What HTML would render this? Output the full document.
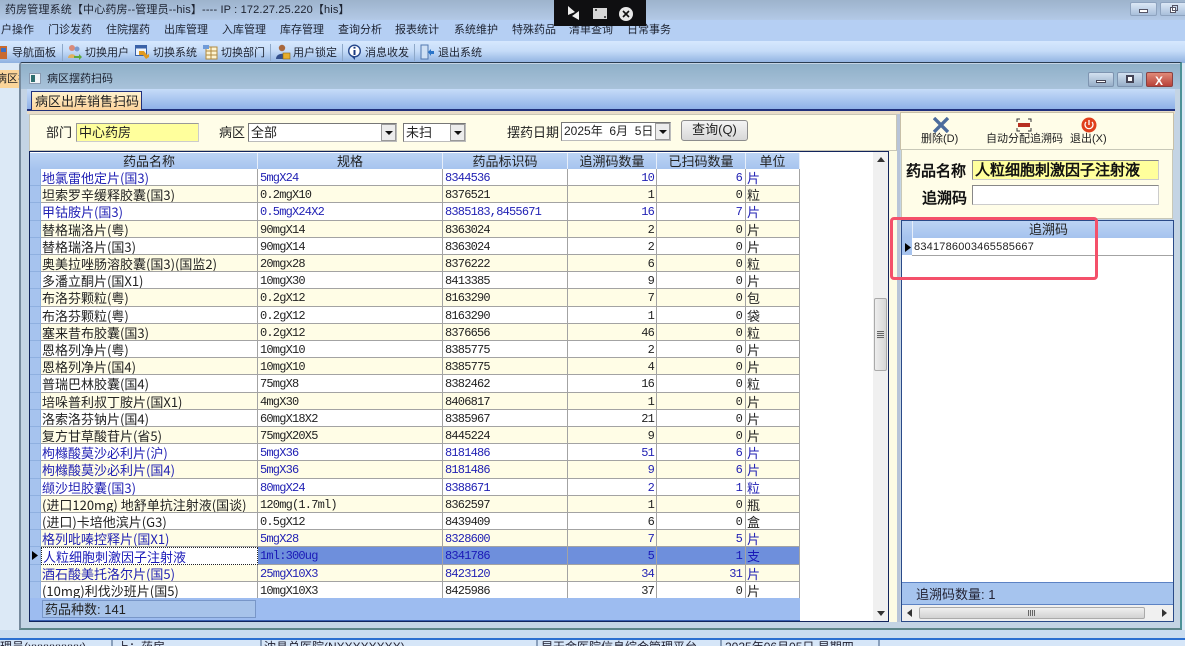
<!DOCTYPE html>
<html lang="zh"><head><meta charset="utf-8"><title>病区摆药扫码</title>
<style>
*{box-sizing:border-box}
html,body{margin:0;padding:0}
body{width:1185px;height:646px;position:relative;overflow:hidden;background:#dce9f6;font:12px "Liberation Sans","WenQuanYi Zen Hei",sans-serif;color:#222}
.a{position:absolute}
.t{position:absolute;white-space:nowrap;line-height:1}
.m{position:absolute;top:24px;font-size:11px;line-height:13px;color:#1c2230;white-space:nowrap}
.b{position:absolute;top:47px;font-size:11px;line-height:13px;color:#1c2230;white-space:nowrap}
.sep{position:absolute;top:44px;width:1px;height:17px;background:#8ea8c8}
.rows{position:absolute;left:30px;top:169px;width:770px;height:429px;overflow:hidden}
.r{position:absolute;left:0;width:770px;height:17.2px;display:flex;background:#fff;color:#222;font:12px/18px "Liberation Mono","WenQuanYi Zen Hei",monospace;letter-spacing:-.8px}
.r.c{background:#fffde6}
.r.u{color:#2222b4}
.r>*{display:block;flex:none;height:17.2px;border-bottom:1px solid #a3a3a3;border-right:1px solid #a3a3a3;overflow:hidden;white-space:nowrap}
.r i{width:11px;background:#a6c3ee!important;border-right:1px solid #8fb0e0;border-bottom-color:#8fb0e0}
.r b{width:217px;padding-left:1px;font:400 13px/17px "WenQuanYi Zen Hei","Noto Sans CJK SC",sans-serif;letter-spacing:0}
.r s{text-decoration:none;width:185px;padding-left:2px}
.r u{text-decoration:none;width:125px;padding-left:2px}
.r em{font-style:normal;width:89px;text-align:right;padding-right:2px}
.r q{quotes:none;width:89px;text-align:right;padding-right:3px}
.r q:before,.r q:after{content:none}
.r var{font:400 13px/17px "WenQuanYi Zen Hei","Noto Sans CJK SC",sans-serif;width:54px;padding-left:1px;letter-spacing:0}
.h{position:absolute;top:153px;height:17px;background:linear-gradient(#bcd4f4,#a5c3ee);border-right:1px solid #e6eefa;text-align:center;font:13px/17px "WenQuanYi Zen Hei",sans-serif;color:#222}
</style></head><body>

<!-- title bar -->
<div class="a" style="left:0;top:0;width:1185px;height:20px;background:linear-gradient(#9db3cc,#b3c9e6)"></div>
<div class="t" style="left:5px;top:4px;font-size:11px;line-height:13px;color:#1c2230;letter-spacing:.15px">药房管理系统【中心药房--管理员--his】---- IP : 172.27.25.220【his】</div>
<!-- menu -->
<div class="a" style="left:0;top:20px;width:1185px;height:21px;background:#b5cff3"></div>
<div class="m" style="left:1px">户操作</div><div class="m" style="left:48px">门诊发药</div><div class="m" style="left:106px">住院摆药</div><div class="m" style="left:164px">出库管理</div><div class="m" style="left:222px">入库管理</div><div class="m" style="left:280px">库存管理</div><div class="m" style="left:338px">查询分析</div><div class="m" style="left:395px">报表统计</div><div class="m" style="left:454px">系统维护</div><div class="m" style="left:512px">特殊药品</div><div class="m" style="left:569px">清单查询</div><div class="m" style="left:627px">日常事务</div>
<!-- toolbar -->
<div class="a" style="left:0;top:41px;width:1185px;height:22px;background:linear-gradient(#d6e8fe,#c6dcf8 45%,#8fb1e0)"></div>
<svg class="a" style="left:0;top:44px" width="10" height="16"><rect x="0" y="2" width="7" height="13" fill="#c96a30"/><rect x="1" y="4" width="5" height="4" fill="#3c6fc4"/></svg>
<div class="b" style="left:12px">导航面板</div><div class="sep" style="left:62px"></div>
<svg class="a" style="left:67px;top:44px" width="15" height="16"><circle cx="5" cy="4" r="3" fill="#d88a7a"/><path d="M1 14c0-5 8-5 8 0z" fill="#e0b060"/><circle cx="10" cy="5" r="2.5" fill="#7a9bd0"/><path d="M7 12h5v-2l3 3-3 3v-2H7z" fill="#5da83c"/></svg>
<div class="b" style="left:85px">切换用户</div>
<svg class="a" style="left:135px;top:45px" width="15" height="15"><rect x=".5" y=".5" width="11" height="10" fill="#eef4fc" stroke="#3a62a8"/><rect x=".5" y=".5" width="11" height="3" fill="#3a62a8"/><path d="M4 6h5l3 4 2-1v3l-3 2-3-4H4z" fill="#e09a20"/></svg>
<div class="b" style="left:153px">切换系统</div>
<svg class="a" style="left:203px;top:44px" width="15" height="16"><rect x="3" y="3" width="11" height="12" fill="#fdf3d0" stroke="#b08a40"/><path d="M3 7h11M3 11h11M8 3v12" stroke="#b08a40"/><rect x="0" y="1" width="6" height="4" fill="#6f9bd8"/></svg>
<div class="b" style="left:221px">切换部门</div><div class="sep" style="left:270px"></div>
<svg class="a" style="left:276px;top:44px" width="15" height="16"><circle cx="6" cy="4" r="3.2" fill="#a8683e"/><path d="M0 15c0-7 12-7 12 0z" fill="#33508c"/><rect x="7" y="9" width="7" height="6" fill="#e6ae2c" stroke="#8a6414" stroke-width=".6"/></svg>
<div class="b" style="left:293px">用户锁定</div><div class="sep" style="left:342px"></div>
<svg class="a" style="left:347px;top:44px" width="15" height="17"><circle cx="7.5" cy="7" r="5.8" fill="#fff" stroke="#26478a" stroke-width="1.4"/><path d="M7.5 2.8v1.8M7.5 6v5" stroke="#1c3b80" stroke-width="2"/><path d="M5 13l3 3v-3z" fill="#26478a"/></svg>
<div class="b" style="left:365px">消息收发</div><div class="sep" style="left:414px"></div>
<svg class="a" style="left:420px;top:44px" width="15" height="16"><rect x="1" y="1" width="7" height="14" fill="#cfe0f5" stroke="#5278b0"/><path d="M8 8l3-3v2h3v3h-3v2z" fill="#2a74c8"/></svg>
<div class="b" style="left:438px">退出系统</div>

<!-- left tab -->
<div class="a" style="left:0;top:70px;width:20px;height:18px;background:#fbd59a;overflow:hidden"><span class="t" style="left:-4px;top:4px;font-size:11px;color:#222">病区扫</span></div>

<!-- recording overlay -->
<div class="a" style="left:554px;top:0;width:92px;height:26px;background:#0f0f11"></div>
<svg class="a" style="left:565px;top:2px" width="70" height="22"><path d="M3 4l7 6-7 3zM14 9v9l-7-4z" fill="#eee"/><rect x="28" y="6" width="14" height="11" fill="#d8d8d8"/><path d="M30 8h2M39 15h2" stroke="#222" stroke-width="1.6"/><circle cx="61" cy="12" r="7" fill="#e8e8e8"/><path d="M58 9l6 6M64 9l-6 6" stroke="#111" stroke-width="1.6"/></svg>

<!-- main window controls -->
<div class="a" style="left:1130px;top:2px;width:27px;height:14px;background:linear-gradient(#dce8f6,#a9bfdb);border:1px solid #8ea3bf;border-radius:2px"></div>
<div class="a" style="left:1139px;top:9px;width:9px;height:4px;background:#fff;border:1px solid #556"></div>
<div class="a" style="left:1160px;top:2px;width:27px;height:14px;background:linear-gradient(#dce8f6,#a9bfdb);border:1px solid #8ea3bf;border-radius:2px"></div>
<div class="a" style="left:1170px;top:7px;width:6px;height:6px;background:#fff;border:1px solid #556"></div>
<div class="a" style="left:1172px;top:5px;width:6px;height:6px;border:1px solid #556"></div>

<!-- child window -->
<div class="a" style="left:19px;top:62px;width:1163px;height:568px;background:#c4d4e4;border:2px solid #76899c;border-top:1px solid #2a3c50;border-right:2px solid #4c9296;border-bottom:2px solid #5c8488;border-radius:3px 0 0 0"></div>
<div class="a" style="left:21px;top:64px;width:1159px;height:25px;background:linear-gradient(#8fb0c8,#a8c2da)"></div>
<svg class="a" style="left:29px;top:73px" width="12" height="11"><rect x=".5" y=".5" width="11" height="10" fill="#f2f5f8" stroke="#8a9ab0"/><rect x="2" y="2" width="4" height="7" fill="#2f6f70"/></svg>
<div class="t" style="left:47px;top:74px;font-size:11px;color:#1c2230">病区摆药扫码</div>
<div class="a" style="left:1088px;top:72px;width:26px;height:15px;background:linear-gradient(#d3e1ef,#97aec8);border:1px solid #7e94b0;border-radius:2px"></div>
<div class="a" style="left:1096px;top:80px;width:10px;height:3px;background:#fff;border:1px solid #445"></div>
<div class="a" style="left:1117px;top:72px;width:26px;height:15px;background:linear-gradient(#d3e1ef,#97aec8);border:1px solid #7e94b0;border-radius:2px"></div>
<div class="a" style="left:1126px;top:75px;width:8px;height:8px;background:#fff;border:2px solid #445"></div>
<div class="a" style="left:1146px;top:72px;width:27px;height:15px;background:linear-gradient(#e08a78,#b8423a);border:1px solid #8a4040;border-radius:2px"></div>
<div class="t" style="left:1155px;top:74px;font:700 12px 'Liberation Sans';color:#fff">X</div>
<!-- tab strip -->
<div class="a" style="left:27px;top:89px;width:1148px;height:22px;background:linear-gradient(#c6dcf8,#8fb1e8);border-bottom:2px solid #20307c"></div>
<div class="a" style="left:31px;top:91px;width:111px;height:19px;background:linear-gradient(#fff3cf,#fcd39b);border:1px solid #20307c;border-bottom:none;font:13px/19px 'WenQuanYi Zen Hei',sans-serif;padding-left:3px;color:#222">病区出库销售扫码</div>

<!-- splitter area -->
<div class="a" style="left:889px;top:111px;width:9px;height:511px;background:#fdfbe4"></div>
<div class="a" style="left:897px;top:111px;width:3px;height:511px;background:#b8c4d8"></div>
<div class="a" style="left:27px;top:111px;width:1148px;height:3px;background:#e8dcc8"></div>
<!-- filter panel -->
<div class="a" style="left:29px;top:114px;width:868px;height:37px;background:#fffde8;border:1px solid #c8c6b6"></div>
<div class="t" style="left:46px;top:126px;font-size:13px">部门</div>
<div class="a" style="left:76px;top:123px;width:123px;height:19px;background:#ffff9c;border:1px solid #ccc;border-left-color:#999;border-top-color:#999;font:13px/17px 'WenQuanYi Zen Hei',sans-serif;padding-left:2px">中心药房</div>
<div class="t" style="left:219px;top:126px;font-size:13px">病区</div>
<div class="a" style="left:248px;top:123px;width:149px;height:19px;background:#fff;border:1px solid #bbb;border-left-color:#777;border-top-color:#777;font:13px/17px 'WenQuanYi Zen Hei',sans-serif;padding-left:2px">全部</div>
<div class="a" style="left:381px;top:124px;width:15px;height:17px;background:#ececec;border:1px solid #999"></div>
<svg class="a" style="left:385px;top:131px" width="8" height="5"><path d="M0 0h8L4 4z" fill="#111"/></svg>
<div class="a" style="left:403px;top:123px;width:63px;height:19px;background:#fff;border:1px solid #bbb;border-left-color:#777;border-top-color:#777;font:13px/17px 'WenQuanYi Zen Hei',sans-serif;padding-left:2px">未扫</div>
<div class="a" style="left:450px;top:124px;width:15px;height:17px;background:#ececec;border:1px solid #999"></div>
<svg class="a" style="left:454px;top:131px" width="8" height="5"><path d="M0 0h8L4 4z" fill="#111"/></svg>
<div class="t" style="left:507px;top:126px;font-size:13px">摆药日期</div>
<div class="a" style="left:561px;top:122px;width:110px;height:19px;background:#fff;border:1px solid #bbb;border-left-color:#777;border-top-color:#777;font:12px/17px 'WenQuanYi Zen Hei',sans-serif;padding-left:2px;white-space:pre">2025年  6月  5日</div>
<div class="a" style="left:655px;top:123px;width:15px;height:17px;background:#ececec;border:1px solid #999"></div>
<svg class="a" style="left:659px;top:130px" width="8" height="5"><path d="M0 0h8L4 4z" fill="#111"/></svg>
<div class="a" style="left:681px;top:120px;width:67px;height:21px;background:linear-gradient(#f4f4f4,#d8d8d8);border:1px solid #8c8c8c;border-radius:3px;text-align:center;font:13px/18px 'WenQuanYi Zen Hei',sans-serif">查询(Q)</div>

<!-- left grid -->
<div class="a" style="left:29px;top:151px;width:860px;height:471px;background:#fff;border:1px solid #12245c"></div>
<div class="a" style="left:30px;top:153px;width:11px;height:17px;background:linear-gradient(#bcd4f4,#a5c3ee)"></div>
<div class="h" style="left:41px;width:217px">药品名称</div>
<div class="h" style="left:258px;width:185px">规格</div>
<div class="h" style="left:443px;width:125px">药品标识码</div>
<div class="h" style="left:568px;width:89px">追溯码数量</div>
<div class="h" style="left:657px;width:89px">已扫码数量</div>
<div class="h" style="left:746px;width:54px">单位</div>

<div class="rows">
<div class="r u" style="top:0"><i></i><b>地氯雷他定片(国3)</b><s>5mgX24</s><u>8344536</u><em>10</em><q>6</q><var>片</var></div>
<div class="r c" style="top:17.2px"><i></i><b>坦索罗辛缓释胶囊(国3)</b><s>0.2mgX10</s><u>8376521</u><em>1</em><q>0</q><var>粒</var></div>
<div class="r u" style="top:34.4px"><i></i><b>甲钴胺片(国3)</b><s>0.5mgX24X2</s><u>8385183,8455671</u><em>16</em><q>7</q><var>片</var></div>
<div class="r c" style="top:51.6px"><i></i><b>替格瑞洛片(粤)</b><s>90mgX14</s><u>8363024</u><em>2</em><q>0</q><var>片</var></div>
<div class="r" style="top:68.8px"><i></i><b>替格瑞洛片(国3)</b><s>90mgX14</s><u>8363024</u><em>2</em><q>0</q><var>片</var></div>
<div class="r c" style="top:86px"><i></i><b>奥美拉唑肠溶胶囊(国3)(国监2)</b><s>20mgx28</s><u>8376222</u><em>6</em><q>0</q><var>粒</var></div>
<div class="r" style="top:103.2px"><i></i><b>多潘立酮片(国X1)</b><s>10mgX30</s><u>8413385</u><em>9</em><q>0</q><var>片</var></div>
<div class="r c" style="top:120.4px"><i></i><b>布洛芬颗粒(粤)</b><s>0.2gX12</s><u>8163290</u><em>7</em><q>0</q><var>包</var></div>
<div class="r" style="top:137.6px"><i></i><b>布洛芬颗粒(粤)</b><s>0.2gX12</s><u>8163290</u><em>1</em><q>0</q><var>袋</var></div>
<div class="r c" style="top:154.8px"><i></i><b>塞来昔布胶囊(国3)</b><s>0.2gX12</s><u>8376656</u><em>46</em><q>0</q><var>粒</var></div>
<div class="r" style="top:172px"><i></i><b>恩格列净片(粤)</b><s>10mgX10</s><u>8385775</u><em>2</em><q>0</q><var>片</var></div>
<div class="r c" style="top:189.2px"><i></i><b>恩格列净片(国4)</b><s>10mgX10</s><u>8385775</u><em>4</em><q>0</q><var>片</var></div>
<div class="r" style="top:206.4px"><i></i><b>普瑞巴林胶囊(国4)</b><s>75mgX8</s><u>8382462</u><em>16</em><q>0</q><var>粒</var></div>
<div class="r c" style="top:223.6px"><i></i><b>培哚普利叔丁胺片(国X1)</b><s>4mgX30</s><u>8406817</u><em>1</em><q>0</q><var>片</var></div>
<div class="r" style="top:240.8px"><i></i><b>洛索洛芬钠片(国4)</b><s>60mgX18X2</s><u>8385967</u><em>21</em><q>0</q><var>片</var></div>
<div class="r c" style="top:258px"><i></i><b>复方甘草酸苷片(省5)</b><s>75mgX20X5</s><u>8445224</u><em>9</em><q>0</q><var>片</var></div>
<div class="r u" style="top:275.2px"><i></i><b>枸橼酸莫沙必利片(沪)</b><s>5mgX36</s><u>8181486</u><em>51</em><q>6</q><var>片</var></div>
<div class="r u c" style="top:292.4px"><i></i><b>枸橼酸莫沙必利片(国4)</b><s>5mgX36</s><u>8181486</u><em>9</em><q>6</q><var>片</var></div>
<div class="r u" style="top:309.6px"><i></i><b>缬沙坦胶囊(国3)</b><s>80mgX24</s><u>8388671</u><em>2</em><q>1</q><var>粒</var></div>
<div class="r c" style="top:326.8px"><i></i><b>(进口120mg) 地舒单抗注射液(国谈)</b><s>120mg(1.7ml)</s><u>8362597</u><em>1</em><q>0</q><var>瓶</var></div>
<div class="r" style="top:344px"><i></i><b>(进口)卡培他滨片(G3)</b><s>0.5gX12</s><u>8439409</u><em>6</em><q>0</q><var>盒</var></div>
<div class="r u c" style="top:361.2px"><i></i><b>格列吡嗪控释片(国X1)</b><s>5mgX28</s><u>8328600</u><em>7</em><q>5</q><var>片</var></div>
<div class="r u" style="top:378.4px;color:#1a1ab8"><i style="position:relative"><svg style="position:absolute;left:2px;top:4px" width="6" height="9"><path d="M0 0l6 4.5L0 9z" fill="#000"/></svg></i><b style="border:1px dotted #222">人粒细胞刺激因子注射液</b><s style="background:#6e8fdc">1ml:300ug</s><u style="background:#6e8fdc">8341786</u><em style="background:#6e8fdc">5</em><q style="background:#6e8fdc">1</q><var style="background:#6e8fdc">支</var></div>
<div class="r u c" style="top:395.6px"><i></i><b>酒石酸美托洛尔片(国5)</b><s>25mgX10X3</s><u>8423120</u><em>34</em><q>31</q><var>片</var></div>
<div class="r" style="top:412.8px"><i></i><b>(10mg)利伐沙班片(国5)</b><s>10mgX10X3</s><u>8425986</u><em>37</em><q>0</q><var>片</var></div>
</div>
<!-- left footer -->
<div class="a" style="left:30px;top:598px;width:770px;height:23px;background:#9dbcf0;border-bottom:1px solid #3a5fb0"></div>
<div class="a" style="left:42px;top:600px;width:214px;height:18px;background:#a7c3ea;border:1px solid #7896c8;font:13px/17px 'WenQuanYi Zen Hei',sans-serif;padding-left:2px">药品种数: 141</div>
<!-- left scrollbar -->
<div class="a" style="left:873px;top:152px;width:15px;height:469px;background:#f0f0f0"></div>
<svg class="a" style="left:877px;top:157px" width="8" height="5"><path d="M0 5h8L4 0z" fill="#333"/></svg>
<svg class="a" style="left:877px;top:611px" width="8" height="5"><path d="M0 0h8L4 5z" fill="#333"/></svg>
<div class="a" style="left:874px;top:298px;width:13px;height:73px;background:linear-gradient(90deg,#eee,#d6d6d6);border:1px solid #aaa;border-radius:2px"></div>
<div class="a" style="left:877px;top:331px;width:7px;height:8px;background:repeating-linear-gradient(#666 0 1px,#ddd 1px 2px)"></div>

<!-- right panel -->
<div class="a" style="left:900px;top:112px;width:274px;height:38px;background:#fffde8;border:1px solid #c8c0a8"></div>
<svg class="a" style="left:933px;top:117px" width="16" height="16"><path d="M1 1l14 14M15 1L1 15" stroke="#4c6c9c" stroke-width="3.4"/></svg>
<div class="t" style="left:921px;top:134px;font-size:11px">删除(D)</div>
<svg class="a" style="left:1016px;top:118px" width="16" height="14"><path d="M1 4V1h3M12 1h3v3M1 10v3h3M12 13h3v-3" fill="none" stroke="#333"/><path d="M2 5h12v4H2z" fill="#b83020"/></svg>
<div class="t" style="left:986px;top:134px;font-size:11px">自动分配追溯码</div>
<svg class="a" style="left:1081px;top:117px" width="16" height="16"><circle cx="8" cy="8" r="7.5" fill="#e0401c"/><path d="M8 3v5M5 5a4 4 0 1 0 6 0" fill="none" stroke="#fff" stroke-width="1.3"/></svg>
<div class="t" style="left:1070px;top:134px;font-size:11px">退出(X)</div>

<div class="a" style="left:901px;top:149px;width:272px;height:70px;background:#fffde8;border:1px solid #c8c8b8"></div>
<div class="t" style="left:906px;top:160px;font:700 15px 'WenQuanYi Zen Hei',sans-serif;color:#111">药品名称</div>
<div class="a" style="left:972px;top:160px;width:187px;height:20px;background:#ffff9c;border:1px solid #ccc;border-left-color:#888;border-top-color:#888;font:700 15px/19px 'WenQuanYi Zen Hei',sans-serif;padding-left:2px;color:#111">人粒细胞刺激因子注射液</div>
<div class="t" style="left:922px;top:187px;font:700 15px 'WenQuanYi Zen Hei',sans-serif;color:#111">追溯码</div>
<div class="a" style="left:972px;top:185px;width:187px;height:20px;background:#fff;border:1px solid #ccc;border-left-color:#888;border-top-color:#888"></div>

<div class="a" style="left:901px;top:220px;width:273px;height:402px;background:#fff;border:1px solid #2a4a88"></div>
<div class="a" style="left:902px;top:221px;width:271px;height:17px;background:linear-gradient(#bcd4f4,#a5c3ee);text-align:center;font:13px/18px 'WenQuanYi Zen Hei',sans-serif;padding-left:22px;color:#222">追溯码</div>
<div class="a" style="left:912px;top:221px;width:1px;height:17px;background:#e6eefa"></div>
<div class="a" style="left:902px;top:238px;width:10px;height:17px;background:#a6c3ee"></div>
<svg class="a" style="left:905px;top:243px" width="6" height="9"><path d="M0 0l6 4.5L0 9z" fill="#000"/></svg>
<div class="a" style="left:912px;top:238px;width:261px;height:18px;border-bottom:1px solid #a3a3a3;font:11px/19px 'Liberation Sans',sans-serif;padding-left:2px;letter-spacing:.2px">8341786003465585667</div>
<div class="a" style="left:902px;top:582px;width:271px;height:23px;background:#a6c4ee;border-top:1px solid #5c82c4;border-bottom:1px solid #5c82c4"></div>
<div class="t" style="left:916px;top:584px;font:13px 'WenQuanYi Zen Hei',sans-serif;color:#223">追溯码数量: 1</div>
<div class="a" style="left:902px;top:605px;width:271px;height:16px;background:#f0f0f0"></div>
<div class="a" style="left:919px;top:607px;width:226px;height:12px;background:linear-gradient(#efefef,#d2d2d2);border:1px solid #aaa;border-radius:2px"></div>
<div class="a" style="left:1028px;top:610px;width:7px;height:6px;background:repeating-linear-gradient(90deg,#666 0 1px,#ddd 1px 2px)"></div>
<svg class="a" style="left:907px;top:609px" width="5" height="8"><path d="M5 0v8L0 4z" fill="#333"/></svg>
<svg class="a" style="left:1162px;top:609px" width="5" height="8"><path d="M0 0v8l5-4z" fill="#333"/></svg>

<!-- red highlight -->
<div class="a" style="left:890px;top:217px;width:208px;height:63px;border:3px solid #f4506a;border-radius:4px"></div>

<!-- status bar -->
<div class="a" style="left:0;top:630px;width:1185px;height:8px;background:#c8dcf0"></div>
<div class="a" style="left:0;top:638px;width:1185px;height:8px;background:#d6e6f8;border-top:2px solid #2a6fd0"></div>
<div class="a" style="left:0;top:640px;width:1185px;height:6px;overflow:hidden;font-size:12px;line-height:12px;color:#223">
<span class="t" style="left:0;top:1px">理员(xxxxxxxxx)</span>
<span class="t" style="left:117px;top:1px">上：药房</span>
<span class="t" style="left:264px;top:1px">沈县总医院(NXXXXXXXX)</span>
<span class="t" style="left:541px;top:1px">昆天金医院信息综合管理平台</span>
<span class="t" style="left:725px;top:1px">2025年06月05日 星期四</span>
</div>
<div class="a" style="left:111px;top:640px;width:2px;height:6px;background:#8aa0bc"></div>
<div class="a" style="left:260px;top:640px;width:2px;height:6px;background:#8aa0bc"></div>
<div class="a" style="left:536px;top:640px;width:2px;height:6px;background:#8aa0bc"></div>
<div class="a" style="left:720px;top:640px;width:2px;height:6px;background:#8aa0bc"></div>
<div class="a" style="left:878px;top:640px;width:2px;height:6px;background:#8aa0bc"></div>
</body></html>
